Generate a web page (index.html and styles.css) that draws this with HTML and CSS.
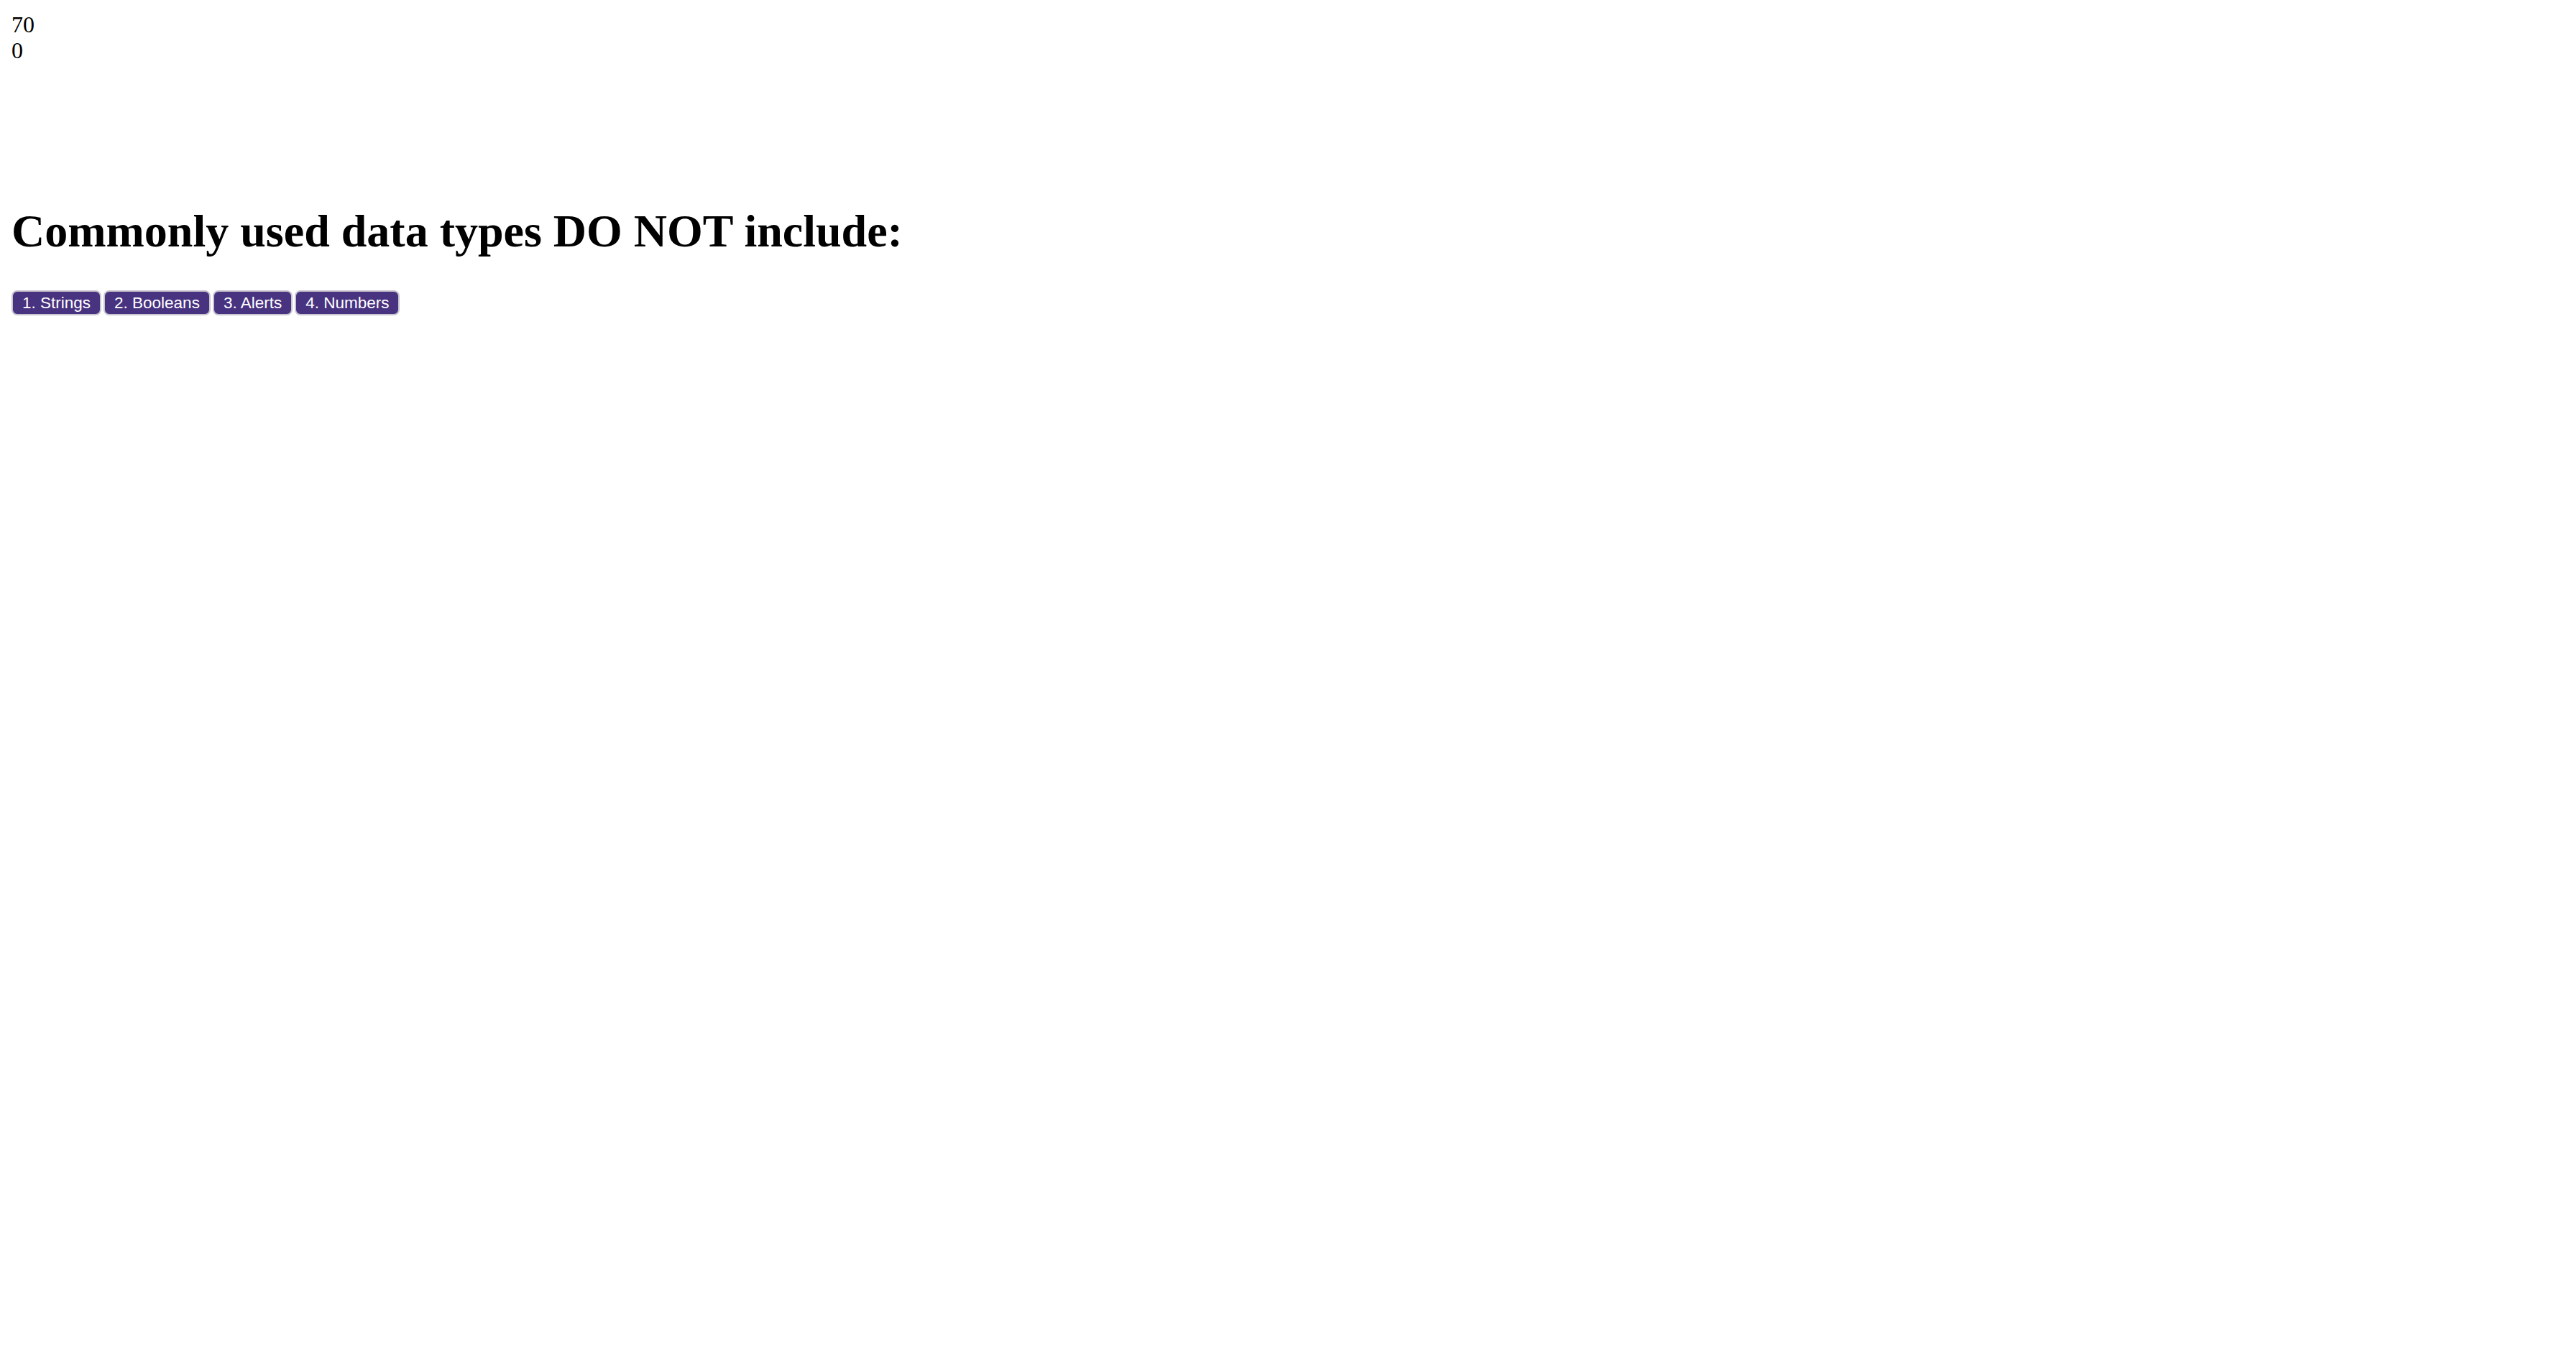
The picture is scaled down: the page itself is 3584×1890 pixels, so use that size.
FILE: index.html
```html
<!DOCTYPE html>
<html lang="en">
<head>
<meta charset="utf-8">
<title>Quiz</title>
<link rel="stylesheet" href="styles.css">
</head>
<body>
<div class="stats">
  <div class="timer">70</div>
  <div class="score">0</div>
</div>
<h1 class="question">Commonly used data types DO NOT include:</h1>
<div class="choices"><button class="choice">1. Strings</button><button class="choice">2. Booleans</button><button class="choice">3. Alerts</button><button class="choice">4. Numbers</button></div>
</body>
</html>
```
FILE: styles.css
```css
html, body {
  background: #ffffff;
}
body {
  margin: 16px;
  font-family: "Liberation Serif", "Times New Roman", serif;
  font-size: 32px;
  color: #000000;
}
.stats {
  line-height: 36px;
}
.question {
  font-family: "Liberation Serif", "Times New Roman", serif;
  font-size: 64px;
  font-weight: bold;
  margin: 198px 0 46px 0;
  line-height: 72px;
}
.choices {
  display: flex;
  gap: 3px;
}
.choice {
  font-family: "Liberation Sans", Arial, sans-serif;
  font-size: 22.5px;
  line-height: 27px;
  color: #ffffff;
  background: #483380;
  border: 2px solid #c9c6cf;
  border-radius: 8px;
  padding: 2px 13px;
  margin: 0;
  height: 35px;
  box-sizing: border-box;
}
```
